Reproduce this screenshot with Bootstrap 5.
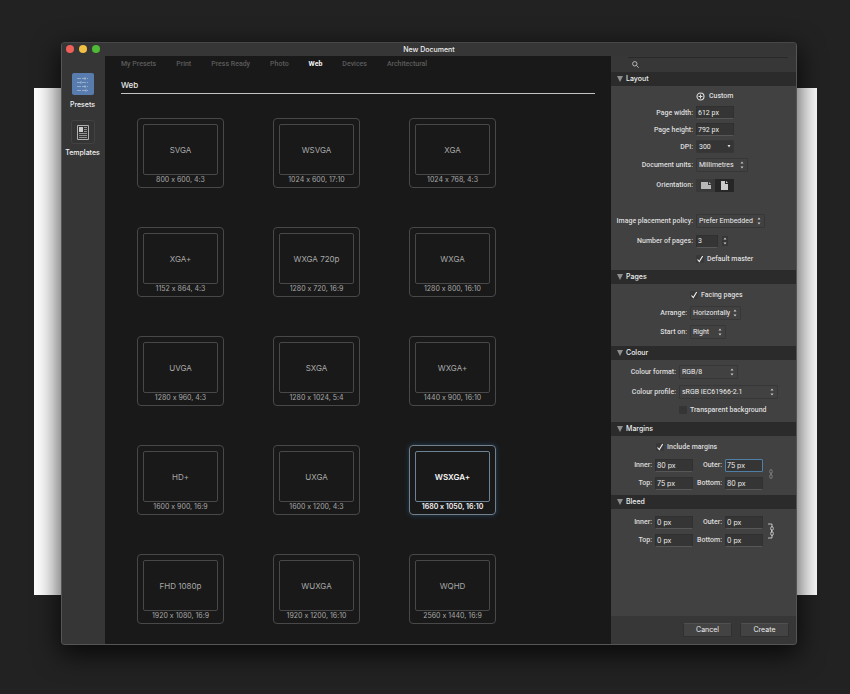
<!DOCTYPE html>
<html lang="en">
<head>
<meta charset="utf-8">
<meta name="viewport" content="width=device-width, initial-scale=1">
<title>New Document</title>
<link href="https://cdn.jsdelivr.net/npm/bootstrap@5.3.0/dist/css/bootstrap.min.css" rel="stylesheet">
<style>
body{background:#222;color:#dedede;font:500 7px/10px Inter,"Liberation Sans",sans-serif;font-feature-settings:"calt" 0}
h1,h2,h3{font-size:7px;line-height:10px;font-weight:500;margin:0}
a{color:inherit;text-decoration:none}
button{font-feature-settings:"calt" 0}
.tabs,.side label,.side .line,.side .pick{font-family:Roboto,"Liberation Sans",sans-serif}
.desk{min-height:100vh;padding:42px 33px 50px 34px}
.desk>*{grid-area:1/1}
.paper{background:#fff;margin:46px 0 50px}
.dialog-win{margin:0 20px 0 27px;border:1px solid #555;border-top-color:#484848;border-radius:4px;overflow:hidden;background:#363636;box-shadow:0 8px 26px 2px rgba(0,0,0,.72);z-index:1}
.title-bar{height:13px;background:#363636}
.title-bar h1{color:#eee}
.lights{left:4px;top:2px;gap:5px}
.lights button{width:8px;height:8px;border:0;padding:0;border-radius:50%;background:#f0605a}
.lights button:nth-child(2){background:#f2bf45}
.lights button:nth-child(3){background:#4fba35}
.rail{width:43px;padding:16px 2px 0 0;gap:10px;background:#363636}
.rail a{color:#f2f2f2}
.rail svg{display:block;margin-bottom:4px}
.stage{background:#191919;padding:3px 16px 20px}
.tabs{gap:20px;color:#5c5c5c}
.tabs .active{color:#f2f2f2;font-weight:700}
.stage h2{font-size:8px;font-weight:500;color:#e8e8e8;margin-top:11px;padding-bottom:3px;border-bottom:1px solid #c4c4c4}
.presets{grid-template-columns:repeat(3,87px);gap:39px 49px;padding:24px 0 0 16px}
.preset{height:70px;padding:5px 5px 1px;border:1px solid #484848;border-radius:4px;background:none;color:#a8a8a8;font-weight:400}
.preset b{height:51px;border:1px solid #484848;border-radius:2px;font-size:8px;font-weight:400}
.preset.chosen{border-color:#72808c;color:#f4f4f4;font-weight:600;box-shadow:0 0 5px #24415a}
.preset.chosen b{border-color:#6d8294;font-weight:600}
.side{width:185px;background:#414141}
.search{height:16px;background:#373737;padding:1px 8px 0 17px}
.search label{border-top:1px solid #292929;padding:0 0 2px 4px}
.search input{background:none;border:0;color:#ddd;outline:0}
.side h3{background:#2b2b2b;height:14px;padding-left:6px;gap:3px;color:#eee}
.rows{padding:2px 0 4px}
.rows.lay,.rows.mar{padding-bottom:3px}
.line{height:18px;display:grid;grid-template-columns:var(--lab) 1fr;column-gap:3px;align-items:center}
.line>:first-child{text-align:right}
.lay{--lab:82px}.pag{--lab:76px}.col{--lab:65px}
.h16{height:16px}.h17{height:17px}.h20{height:20px}
.field{height:13px;width:38px;border:1px solid #303030;border-bottom-color:#575757;background:#353535;color:#ededed;padding:0 0 0 1px;border-radius:1px;outline:0}
.field.short{width:22px}
.field.on{border-color:#4f7fa6}
.pick{height:14px;border:1px solid #373737;background:#414141 url("data:image/svg+xml,%3Csvg xmlns='http://www.w3.org/2000/svg' width='4' height='8'%3E%3Cpath d='M.5 2.500 2 .5l1.500 2zM.5 5.500 2 7.500l1.500-2z' fill='%23ccc'/%3E%3C/svg%3E") no-repeat right 3px center;appearance:none;color:#ededed;padding:0 0 0 2px;border-radius:1px}
.pick.dpi{width:38px;height:13px;background:#353535 url("data:image/svg+xml,%3Csvg xmlns='http://www.w3.org/2000/svg' width='4' height='3'%3E%3Cpath d='M.5 0h3L2 2.500z' fill='%23ddd'/%3E%3C/svg%3E") no-repeat right 2px center}
.w-units{width:52px}.w-policy{width:69px}.w-arr{width:51px}.w-start{width:36px}.w-fmt{width:59px}.w-prof{width:99px}
.tick{appearance:none;width:8px;height:8px;margin:0 3px 0 0;background:#353535;border-radius:1px}
.tick:checked{background:#383838 url("data:image/svg+xml,%3Csvg xmlns='http://www.w3.org/2000/svg' viewBox='0 0 8 8'%3E%3Cpath d='M1.500 4.500 3.300 6.500 6.700 1' fill='none' stroke='%23f2f2f2' stroke-width='1.1'/%3E%3C/svg%3E")}
.include{padding:4px 0 4px 45px}
.orient label{width:19px;height:13px;background:#393939;cursor:pointer}
.orient input:checked+label{background:#262626}
.quad{display:grid;grid-template-columns:41px 38px 26px 38px 8px;column-gap:3px;align-items:center;grid-auto-rows:18px}
.quad label{text-align:right}
.chain{grid-column:5;grid-row:1/3;justify-self:end}
.foot{background:#373737;height:28px;padding:0 7px;gap:8px}
.push{width:49px;height:14px;border:1px solid #303030;border-top-color:#505050;border-radius:2px;background:#434343;color:#ededed;padding:0}
</style>
</head>
<body>
<div class="desk d-grid">
<div class="paper"></div>
<main class="dialog-win d-flex flex-column">
 <header class="title-bar position-relative d-flex justify-content-center align-items-center">
  <div class="lights position-absolute d-flex"><button aria-label="Close"></button><button aria-label="Minimise"></button><button aria-label="Zoom"></button></div>
  <h1>New Document</h1>
 </header>
 <div class="d-flex flex-grow-1">
  <nav class="rail d-flex flex-column align-items-center flex-shrink-0" aria-label="Source">
   <a href="#" class="d-flex flex-column align-items-center"><svg width="24" height="24" viewBox="0 0 24 24"><rect x="1" y="1" width="22" height="22" rx="2" fill="#577cad"/><g stroke="#a3b9d4" fill="none" stroke-width=".8"><path d="M6 6.500h11M6 10.500h11M6 14.500h11M6 18.500h11" stroke-dasharray="4 1"/><path d="M14 5v3M10 9v3M14 13v3M15 17v3"/></g></svg>Presets</a>
   <a href="#" class="d-flex flex-column align-items-center"><svg width="24" height="24" viewBox="0 0 24 24"><rect x=".5" y=".5" width="23" height="23" rx="2" fill="#343434" stroke="#424242"/><path d="M6.500 5.500h11v14h-11z" fill="#333" stroke="#b0b0b0"/><path d="M8 7h4v5H8z" fill="#ccc"/><path d="M13 7.500h3M13 9.500h3M13 11.500h3M8 13.500h8M8 15.500h8M8 17.500h8" stroke="#aaa" stroke-width=".8"/></svg>Templates</a>
  </nav>
  <section class="stage flex-grow-1">
   <nav class="tabs d-flex" aria-label="Categories"><a href="#">My Presets</a><a href="#">Print</a><a href="#">Press Ready</a><a href="#">Photo</a><a href="#" class="active">Web</a><a href="#">Devices</a><a href="#">Architectural</a></nav>
   <h2>Web</h2>
   <div class="presets d-grid">
    <button class="preset d-flex flex-column"><b class="d-flex w-100 align-items-center justify-content-center">SVGA</b><span class="w-100">800 x 600, 4:3</span></button>
    <button class="preset d-flex flex-column"><b class="d-flex w-100 align-items-center justify-content-center">WSVGA</b><span class="w-100">1024 x 600, 17:10</span></button>
    <button class="preset d-flex flex-column"><b class="d-flex w-100 align-items-center justify-content-center">XGA</b><span class="w-100">1024 x 768, 4:3</span></button>
    <button class="preset d-flex flex-column"><b class="d-flex w-100 align-items-center justify-content-center">XGA+</b><span class="w-100">1152 x 864, 4:3</span></button>
    <button class="preset d-flex flex-column"><b class="d-flex w-100 align-items-center justify-content-center">WXGA 720p</b><span class="w-100">1280 x 720, 16:9</span></button>
    <button class="preset d-flex flex-column"><b class="d-flex w-100 align-items-center justify-content-center">WXGA</b><span class="w-100">1280 x 800, 16:10</span></button>
    <button class="preset d-flex flex-column"><b class="d-flex w-100 align-items-center justify-content-center">UVGA</b><span class="w-100">1280 x 960, 4:3</span></button>
    <button class="preset d-flex flex-column"><b class="d-flex w-100 align-items-center justify-content-center">SXGA</b><span class="w-100">1280 x 1024, 5:4</span></button>
    <button class="preset d-flex flex-column"><b class="d-flex w-100 align-items-center justify-content-center">WXGA+</b><span class="w-100">1440 x 900, 16:10</span></button>
    <button class="preset d-flex flex-column"><b class="d-flex w-100 align-items-center justify-content-center">HD+</b><span class="w-100">1600 x 900, 16:9</span></button>
    <button class="preset d-flex flex-column"><b class="d-flex w-100 align-items-center justify-content-center">UXGA</b><span class="w-100">1600 x 1200, 4:3</span></button>
    <button class="preset chosen d-flex flex-column"><b class="d-flex w-100 align-items-center justify-content-center">WSXGA+</b><span class="w-100">1680 x 1050, 16:10</span></button>
    <button class="preset d-flex flex-column"><b class="d-flex w-100 align-items-center justify-content-center">FHD 1080p</b><span class="w-100">1920 x 1080, 16:9</span></button>
    <button class="preset d-flex flex-column"><b class="d-flex w-100 align-items-center justify-content-center">WUXGA</b><span class="w-100">1920 x 1200, 16:10</span></button>
    <button class="preset d-flex flex-column"><b class="d-flex w-100 align-items-center justify-content-center">WQHD</b><span class="w-100">2560 x 1440, 16:9</span></button>
   </div>
  </section>
  <aside class="side d-flex flex-column flex-shrink-0">
   <div class="search"><label class="d-flex align-items-center h-100"><svg width="7" height="7" viewBox="0 0 7 7" fill="none" stroke="#c4c4c4" stroke-width=".9"><circle cx="2.800" cy="2.800" r="2.200"/><path d="m4.500 4.500 2.200 2.200"/></svg><input type="search" class="flex-grow-1" aria-label="Search"></label></div>
   <h3 class="d-flex align-items-center"><svg width="6" height="6" viewBox="0 0 6 6"><path d="M0 0h6L3 6z" fill="#8e8e8e"/></svg>Layout</h3>
   <div class="rows lay">
    <div class="line h16"><span></span><span class="d-flex align-items-center gap-1"><svg width="9" height="9" viewBox="0 0 9 9" fill="none" stroke="#ddd"><circle cx="4.500" cy="4.500" r="3.500" stroke-width="1.100"/><path d="M4.500 2.500v4M2.500 4.500h4"/></svg>Custom</span></div>
    <div class="line h17"><label for="pw">Page width:</label><input id="pw" class="field" value="612 px"></div>
    <div class="line h17"><label for="ph">Page height:</label><input id="ph" class="field" value="792 px"></div>
    <div class="line h17"><label for="dpi">DPI:</label><select id="dpi" class="pick dpi"><option>300</option></select></div>
    <div class="line h20"><label for="un">Document units:</label><select id="un" class="pick w-units"><option>Millimetres</option></select></div>
    <div class="line h20"><span>Orientation:</span><div class="orient d-flex" role="group" aria-label="Orientation">
     <input class="btn-check" type="radio" name="o" id="ol"><label for="ol" class="d-flex align-items-center justify-content-center" aria-label="Landscape"><svg width="10" height="7" viewBox="0 0 10 7"><path d="M0 0h7v3h3v4H0zM8 0l2 2H8z" fill="#b8b8b8"/></svg></label>
     <input class="btn-check" type="radio" name="o" id="op" checked><label for="op" class="d-flex align-items-center justify-content-center" aria-label="Portrait"><svg width="7" height="9" viewBox="0 0 7 9"><path d="M0 0h4v3h3v6H0zM5 0l2 2H5z" fill="#ccc"/></svg></label></div></div>
    <div class="line mt-3 h20"><label for="pol">Image placement policy:</label><select id="pol" class="pick w-policy"><option>Prefer Embedded</option></select></div>
    <div class="line h20"><label for="np">Number of pages:</label><span class="d-flex align-items-center gap-1"><input id="np" class="field short" value="3"><svg width="6" height="10" viewBox="0 0 6 10"><path d="M0 0h6v10H0z" fill="#363636"/><path d="M1.500 3.500 3 1.500l1.500 2zM1.500 6.500 3 8.500l1.500-2z" fill="#ccc"/></svg></span></div>
    <div class="line h16"><span></span><label class="d-flex align-items-center"><input type="checkbox" class="tick" checked>Default master</label></div>
   </div>
   <h3 class="d-flex align-items-center"><svg width="6" height="6" viewBox="0 0 6 6"><path d="M0 0h6L3 6z" fill="#8e8e8e"/></svg>Pages</h3>
   <div class="rows pag">
    <div class="line"><span></span><label class="d-flex align-items-center"><input type="checkbox" class="tick" checked>Facing pages</label></div>
    <div class="line"><label for="ar">Arrange:</label><select id="ar" class="pick w-arr"><option>Horizontally</option></select></div>
    <div class="line h20"><label for="st">Start on:</label><select id="st" class="pick w-start"><option>Right</option></select></div>
   </div>
   <h3 class="d-flex align-items-center"><svg width="6" height="6" viewBox="0 0 6 6"><path d="M0 0h6L3 6z" fill="#8e8e8e"/></svg>Colour</h3>
   <div class="rows col flex-grow-0">
    <div class="line h20"><label for="cf">Colour format:</label><select id="cf" class="pick w-fmt"><option>RGB/8</option></select></div>
    <div class="line h20"><label for="cp">Colour profile:</label><select id="cp" class="pick w-prof"><option>sRGB IEC61966-2.1</option></select></div>
    <div class="line h16"><span></span><label class="d-flex align-items-center"><input type="checkbox" class="tick">Transparent background</label></div>
   </div>
   <h3 class="d-flex align-items-center"><svg width="6" height="6" viewBox="0 0 6 6"><path d="M0 0h6L3 6z" fill="#8e8e8e"/></svg>Margins</h3>
   <div class="rows mar">
    <label class="include d-flex align-items-center"><input type="checkbox" class="tick" checked>Include margins</label>
    <div class="quad"><label for="mi">Inner:</label><input id="mi" class="field" value="80 px"><label for="mo">Outer:</label><input id="mo" class="field on" value="75 px">
     <svg class="chain" width="6" height="16" viewBox="0 0 6 16" fill="none" stroke="#858585" stroke-width=".8"><ellipse cx="3" cy="5.500" rx="1.300" ry="2"/><ellipse cx="3" cy="10.500" rx="1.300" ry="2"/><path d="M3 6.500v3"/></svg>
     <label for="mt">Top:</label><input id="mt" class="field" value="75 px"><label for="mb">Bottom:</label><input id="mb" class="field" value="80 px"></div>
   </div>
   <h3 class="d-flex align-items-center"><svg width="6" height="6" viewBox="0 0 6 6"><path d="M0 0h6L3 6z" fill="#8e8e8e"/></svg>Bleed</h3>
   <div class="rows pt-1 flex-grow-1">
    <div class="quad"><label for="bi">Inner:</label><input id="bi" class="field" value="0 px"><label for="bo">Outer:</label><input id="bo" class="field" value="0 px">
     <svg class="chain" width="6" height="16" viewBox="0 0 6 16" fill="none" stroke="#ccc" stroke-width=".9"><path d="M0 1h4v3M0 15h4v-3"/><ellipse cx="4" cy="5.500" rx="1.300" ry="2"/><ellipse cx="4" cy="10.500" rx="1.300" ry="2"/><path d="M3.500 6.500v3"/></svg>
     <label for="bt">Top:</label><input id="bt" class="field" value="0 px"><label for="bb">Bottom:</label><input id="bb" class="field" value="0 px"></div>
   </div>
   <footer class="foot d-flex justify-content-end align-items-center"><button class="push">Cancel</button><button class="push">Create</button></footer>
  </aside>
 </div>
</main>
</div>
<script src="https://cdn.jsdelivr.net/npm/bootstrap@5.3.0/dist/js/bootstrap.bundle.min.js"></script>
</body>
</html>
